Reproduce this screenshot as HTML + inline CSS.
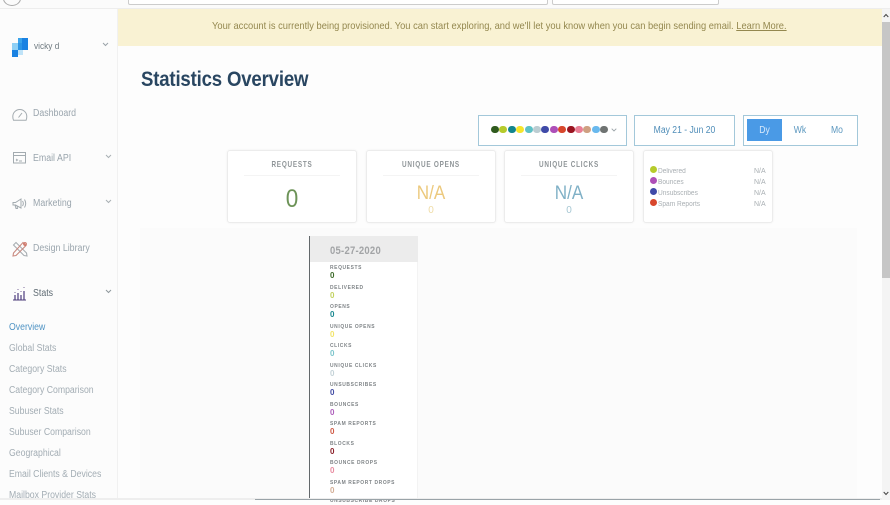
<!DOCTYPE html>
<html><head><meta charset="utf-8"><style>
html,body{margin:0;padding:0}
body{width:890px;height:500px;overflow:hidden;background:#fdfdfd;position:relative;font-family:"Liberation Sans",sans-serif}
.a{position:absolute;white-space:nowrap}
.nav{color:#9aa5ad;font-size:10px;line-height:12px;transform:scaleX(.88);transform-origin:0 0}
.sub{color:#a3adb4;font-size:10px;line-height:12px;left:9px;transform:scaleX(.87);transform-origin:0 0}
.card{position:absolute;top:150px;width:128px;height:71px;background:#fff;border:1px solid #ececec;border-radius:3px;box-shadow:0 0 2px #f0f0f0}
.ct{position:absolute;left:0;right:0;top:8px;text-align:center;font-size:8.5px;letter-spacing:1px;color:#8f9598;line-height:11px;font-weight:bold;transform:scaleX(.75)}
.hr{position:absolute;left:16px;right:16px;top:24px;height:1px;background:#f4f4f4}
.cv{position:absolute;left:0;right:0;text-align:center;font-size:19px;line-height:22px;top:32px;transform:scaleX(.9)}
.cs{position:absolute;left:0;right:0;text-align:center;font-size:10px;line-height:12px;top:54px}
.box{position:absolute;top:115px;height:29px;border:1px solid #a3c8da;background:#fff;box-sizing:content-box}
.d{position:absolute;top:125.500px;width:7.500px;height:7.500px;border-radius:50%}
.ld{position:absolute;left:650px;width:7px;height:7px;border-radius:50%}
.lt{position:absolute;left:658px;font-size:7px;line-height:9px;color:#a9afb3;white-space:nowrap;transform:scaleX(.94);transform-origin:0 0}
.ln{position:absolute;left:754px;font-size:7px;line-height:9px;color:#a9afb3}
.tl{position:absolute;left:330px;font-size:5.600px;letter-spacing:.7px;line-height:7px;color:#7f8487;font-weight:bold;white-space:nowrap;transform:scaleX(.88);transform-origin:0 0}
.tv{position:absolute;left:330px;font-size:8px;line-height:8px;font-weight:bold}
.bt{font-size:10px;line-height:13px;text-align:center;transform:scaleX(.86)}
</style></head><body>

<!-- top browser strip -->
<div class="a" style="left:0;top:0;width:890px;height:8px;background:#fbfbfb;border-bottom:1px solid #ededed"></div>
<div class="a" style="left:3px;top:-9px;width:16px;height:13px;border:1px solid #aaa;border-radius:50%"></div>
<div class="a" style="left:128px;top:-4px;width:418px;height:7px;border:1px solid #ccc;background:#fff;border-radius:2px"></div>
<div class="a" style="left:552px;top:-4px;width:165px;height:7px;border:1px solid #ccc;background:#fff;border-radius:2px"></div>

<!-- sidebar -->
<div class="a" style="left:0;top:9px;width:117px;height:491px;background:#fcfcfc;border-right:1px solid #f1f1f1"></div>
<svg class="a" style="left:11px;top:38px" width="18" height="19" viewBox="0 0 18 19">
<rect x="7" y="0" width="10" height="12" fill="#1a82e2"/><rect x="7" y="0" width="4" height="5" fill="#3aa3ea"/><rect x="1" y="5" width="6" height="7" fill="#8fd0f5"/><rect x="7" y="5" width="4" height="7" fill="#2c95e6"/><rect x="1" y="12" width="6" height="7" fill="#1a82e2"/><rect x="7" y="12" width="5" height="5" fill="#bfe3f8"/>
</svg>
<div class="a" style="left:34px;top:40px;font-size:9px;line-height:12px;color:#6f7a80;transform:scaleX(.92);transform-origin:0 0">vicky d</div>
<svg class="a" style="left:102px;top:42px" width="7" height="5" viewBox="0 0 7 5"><path d="M1 1l2.500 2.500L6 1" fill="none" stroke="#9aa3a8" stroke-width="1"/></svg>

<svg class="a" style="left:12px;top:107px" width="16" height="14" viewBox="0 0 16 14" fill="none" stroke="#a3abb0" stroke-width="1"><path d="M1.500 13.200C1 12 .8 11 .8 9.500a7 7 0 0 1 14 0c0 1.500-.2 2.500-.7 3.700z"/><path d="M6.500 10.500L10 6"/></svg>
<div class="a nav" style="left:33px;top:108px">Dashboard</div>

<svg class="a" style="left:13px;top:152px" width="14" height="12" viewBox="0 0 14 12" fill="none" stroke="#a3abb0" stroke-width="1"><rect x=".5" y=".5" width="12" height="10.500"/><path d="M.5 3.500h12M3 7l1.500 1L3 9M6 9h3"/></svg>
<div class="a nav" style="left:33px;top:153px">Email API</div>
<svg class="a" style="left:105px;top:154px" width="7" height="5" viewBox="0 0 7 5"><path d="M1 1l2.500 2.500L6 1" fill="none" stroke="#a9b0b4" stroke-width="1"/></svg>

<svg class="a" style="left:12px;top:197px" width="15" height="13" viewBox="0 0 15 13" fill="none" stroke="#a3abb0" stroke-width="1"><path d="M1 5.500h2.500L9 2v9L3.500 8H1zM3 8l1 3.500h1.500L5 8.700M10.500 4c1 1.500 1 3.500 0 5M12.500 2.500c1.500 2.500 1.500 5.500 0 8"/></svg>
<div class="a nav" style="left:33px;top:198px">Marketing</div>
<svg class="a" style="left:105px;top:199px" width="7" height="5" viewBox="0 0 7 5"><path d="M1 1l2.500 2.500L6 1" fill="none" stroke="#a9b0b4" stroke-width="1"/></svg>

<svg class="a" style="left:12px;top:241px" width="16" height="16" viewBox="0 0 16 16" fill="none" stroke-width="1.100"><path d="M1.500 4L4 1.500 14.500 12l.5 3-3-.5z" stroke="#a8aeb2"/><path d="M11 1.500l3 3L4 14.500l-3 .5.500-3z" stroke="#c98a80"/><circle cx="13" cy="3" r="1.300" stroke="#cf6f60"/></svg>
<div class="a nav" style="left:33px;top:243px">Design Library</div>

<svg class="a" style="left:13px;top:286px" width="14" height="15" viewBox="0 0 14 15"><path d="M0 14h13" stroke="#4a3a78" stroke-width="1"/><path d="M2 13.500V9M5 13.500V7M8 13.500V9M11 13.500V5" stroke="#5a4a88" stroke-width="1.300"/><path d="M2 6v1M5 3v1M8 5v1M11 1v1" stroke="#7b6a9a" stroke-width="1"/></svg>
<div class="a nav" style="left:33px;top:288px;color:#5f6b73">Stats</div>
<svg class="a" style="left:105px;top:289px" width="7" height="5" viewBox="0 0 7 5"><path d="M1 1l2.500 2.500L6 1" fill="none" stroke="#8f989d" stroke-width="1"/></svg>

<div class="a sub" style="top:322px;color:#4f93c4">Overview</div>
<div class="a sub" style="top:343px">Global Stats</div>
<div class="a sub" style="top:364px">Category Stats</div>
<div class="a sub" style="top:385px">Category Comparison</div>
<div class="a sub" style="top:406px">Subuser Stats</div>
<div class="a sub" style="top:427px">Subuser Comparison</div>
<div class="a sub" style="top:448px">Geographical</div>
<div class="a sub" style="top:469px">Email Clients &amp; Devices</div>
<div class="a sub" style="top:490px">Mailbox Provider Stats</div>

<!-- banner -->
<div class="a" style="left:118px;top:9px;width:764px;height:37px;background:#f9f2d3"></div>
<div class="a" style="left:212px;top:21px;font-size:10.300px;line-height:12px;color:#94884f;transform:scaleX(.907);transform-origin:0 0">Your account is currently being provisioned. You can start exploring, and we'll let you know when you can begin sending email. <span style="text-decoration:underline">Learn More.</span></div>

<div class="a" style="left:141px;top:66px;font-size:21.500px;line-height:26px;font-weight:bold;color:#294661;letter-spacing:-.2px;transform:scaleX(.865);transform-origin:0 0">Statistics Overview</div>

<!-- filters -->
<div class="box" style="left:478px;width:147px"></div>
<span class="d" style="left:491px;background:#2f5a1e"></span><span class="d" style="left:499px;background:#b6cb2c"></span><span class="d" style="left:508px;background:#12858d"></span><span class="d" style="left:516px;background:#f6e52c"></span><span class="d" style="left:525px;background:#5ec1c6"></span><span class="d" style="left:533px;background:#bccdd2"></span><span class="d" style="left:541px;background:#3f4aa8"></span><span class="d" style="left:550px;background:#ae4fb8"></span><span class="d" style="left:558px;background:#d8472c"></span><span class="d" style="left:567px;background:#9a1420"></span><span class="d" style="left:575px;background:#ea7f96"></span><span class="d" style="left:583px;background:#cfa082"></span><span class="d" style="left:592px;background:#69b9ee"></span><span class="d" style="left:600px;background:#6f7372"></span>
<svg class="a" style="left:611px;top:128px" width="6" height="4" viewBox="0 0 6 4"><path d="M.7.700L3 3 5.300.700" fill="none" stroke="#9aa3a8" stroke-width=".9"/></svg>

<div class="box" style="left:634px;width:99px"></div>
<div class="a bt" style="left:634px;top:124px;width:101px;color:#4f8db8">May 21 - Jun 20</div>

<div class="box" style="left:743px;width:113px"></div>
<div class="a" style="left:747px;top:119px;width:35px;height:22px;background:#4a9ae6"></div>
<div class="a bt" style="left:747px;top:124px;width:35px;color:#d8e9fa">Dy</div>
<div class="a bt" style="left:782px;top:124px;width:36px;color:#5b97bf">Wk</div>
<div class="a bt" style="left:819px;top:124px;width:36px;color:#5b97bf">Mo</div>

<!-- cards -->
<div class="card" style="left:227px"><div class="ct">REQUESTS</div><div class="hr"></div><div class="cv" style="top:35px;font-size:25px;line-height:26px;color:#6d9358">0</div></div>
<div class="card" style="left:366px"><div class="ct">UNIQUE OPENS</div><div class="hr"></div><div class="cv" style="color:#ecc97d">N/A</div><div class="cs" style="color:#efdca6">0</div></div>
<div class="card" style="left:504px"><div class="ct">UNIQUE CLICKS</div><div class="hr"></div><div class="cv" style="color:#7fb0c6">N/A</div><div class="cs" style="color:#a6c7d3">0</div></div>
<div class="card" style="left:643px"></div>

<span class="ld" style="top:166px;background:#b6cb2c"></span><div class="lt" style="top:167px">Delivered</div><div class="ln" style="top:167px">N/A</div>
<span class="ld" style="top:177px;background:#ae4fb8"></span><div class="lt" style="top:178px">Bounces</div><div class="ln" style="top:178px">N/A</div>
<span class="ld" style="top:188px;background:#3f4aa8"></span><div class="lt" style="top:189px">Unsubscribes</div><div class="ln" style="top:189px">N/A</div>
<span class="ld" style="top:199px;background:#d8472c"></span><div class="lt" style="top:200px">Spam Reports</div><div class="ln" style="top:200px">N/A</div>

<!-- chart -->
<div class="a" style="left:140px;top:228px;width:717px;height:272px;background:#fbfbfb"></div>
<div class="a" style="left:309px;top:236px;width:108px;height:264px;background:#fff;border-right:1px solid #f3f3f3"></div>
<div class="a" style="left:309px;top:236px;width:1px;height:264px;background:#63686b"></div>
<div class="a" style="left:310px;top:236px;width:108px;height:26px;background:#ececec"></div>
<div class="a" style="left:330px;top:244px;font-size:11px;line-height:14px;letter-spacing:.3px;font-weight:bold;color:#a2a4a6;transform:scaleX(.86);transform-origin:0 0">05-27-2020</div>

<div class="tl" style="top:265px">REQUESTS</div><div class="tv" style="top:272px;color:#3d6b2a">0</div>
<div class="tl" style="top:285px">DELIVERED</div><div class="tv" style="top:292px;color:#c3d260">0</div>
<div class="tl" style="top:304px">OPENS</div><div class="tv" style="top:311px;color:#1a8890">0</div>
<div class="tl" style="top:324px">UNIQUE OPENS</div><div class="tv" style="top:331px;color:#f2e46a">0</div>
<div class="tl" style="top:343px">CLICKS</div><div class="tv" style="top:350px;color:#7cc5cc">0</div>
<div class="tl" style="top:363px">UNIQUE CLICKS</div><div class="tv" style="top:370px;color:#c5d3d8">0</div>
<div class="tl" style="top:382px">UNSUBSCRIBES</div><div class="tv" style="top:389px;color:#414ba3">0</div>
<div class="tl" style="top:402px">BOUNCES</div><div class="tv" style="top:409px;color:#ae5fbb">0</div>
<div class="tl" style="top:421px">SPAM REPORTS</div><div class="tv" style="top:428px;color:#cf5a45">0</div>
<div class="tl" style="top:441px">BLOCKS</div><div class="tv" style="top:448px;color:#8a1f28">0</div>
<div class="tl" style="top:460px">BOUNCE DROPS</div><div class="tv" style="top:467px;color:#e88ba0">0</div>
<div class="tl" style="top:480px">SPAM REPORT DROPS</div><div class="tv" style="top:487px;color:#d3ae95">0</div>
<div class="tl" style="top:498px">UNSUBSCRIBE DROPS</div>

<!-- bottom edge -->
<div class="a" style="left:0;top:498px;width:882px;height:2px;background:#eeeeee"></div>
<div class="a" style="left:255px;top:499px;width:625px;height:1px;background:#9aa3a8"></div>

<!-- scrollbar -->
<div class="a" style="left:882px;top:9px;width:8px;height:491px;background:#f4f4f4"></div>
<div class="a" style="left:882px;top:22px;width:8px;height:256px;background:#c6c6c6"></div>
<svg class="a" style="left:883px;top:13px" width="6" height="5" viewBox="0 0 6 5"><path d="M.7 4L3 1.500 5.300 4" fill="none" stroke="#444" stroke-width="1"/></svg>
<svg class="a" style="left:883px;top:491px" width="6" height="5" viewBox="0 0 6 5"><path d="M.7 1L3 3.500 5.300 1" fill="none" stroke="#444" stroke-width="1"/></svg>
</body></html>
